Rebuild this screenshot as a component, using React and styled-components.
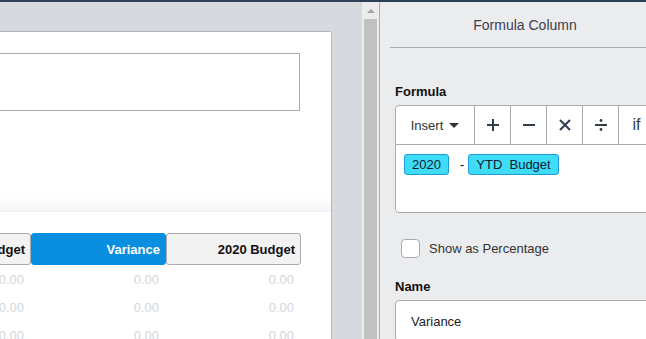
import styled, { createGlobalStyle } from "styled-components";

const Global = createGlobalStyle`
	html, body {
		margin: 0;
		padding: 0;
		overflow: hidden;
		background: #d6d9dd;
		font-family: "Liberation Sans", Arial, sans-serif;
	}
`;

const Screen = styled.div`
	width: 646px;
	height: 339px;
	display: flex;
	flex-direction: column;
	overflow: hidden;
`;

const TopBar = styled.div`
	height: 2px;
	background: #2e4053;
	flex-shrink: 0;
`;

const Body = styled.div`
	flex: 1;
	display: flex;
	min-height: 0;
`;

const Workspace = styled.div`
	width: 362px;
	flex-shrink: 0;
	background: #d6d9dd;
	padding-top: 29px;
	overflow: hidden;
`;

const Card = styled.div`
	margin-left: -135px;
	width: 466px;
	background: #fff;
	border: 1px solid #b2b5ba;
	border-left: none;
	border-bottom: none;
	border-top-right-radius: 3px;
	display: flex;
	flex-direction: column;
`;

const TopSection = styled.div`
	flex-shrink: 0;
	box-sizing: border-box;
	height: 180px;
	padding: 21px 31px 0;
	background: linear-gradient(to bottom, #fff 92%, #f3f4f5 100%);
	border-bottom: 1px solid #eef0f2;
`;

const TextBox = styled.div`
	height: 56px;
	border: 1px solid #a9abae;
`;

const TableSection = styled.div`
	flex-shrink: 0;
	padding: 21px 31px 0;
`;

const Row = styled.div`
	display: grid;
	grid-template-columns: repeat(3, 135px);
`;

const HeadCell = styled.div`
	height: 32px;
	box-sizing: border-box;
	display: flex;
	align-items: center;
	justify-content: flex-end;
	padding-right: 5px;
	font-size: 13px;
	font-weight: bold;
	border-radius: 3px;
	border: 1px solid ${({ active }) => (active ? "#0a8fe0" : "#a9abae")};
	background: ${({ active }) => (active ? "#0a8fe0" : "#f2f2f2")};
	color: ${({ active }) => (active ? "#fff" : "#111")};
`;

const Cell = styled.div`
	height: 28px;
	display: flex;
	align-items: center;
	justify-content: flex-end;
	padding-right: 7px;
	font-size: 13px;
	color: #d2d6dc;
`;

const Scrollbar = styled.div`
	width: 17px;
	flex-shrink: 0;
	background: #ececec;
	display: flex;
	flex-direction: column;
	align-items: center;
	padding: 0 2px;
	box-sizing: border-box;
`;

const ScrollArrow = styled.div`
	height: 17px;
	display: flex;
	align-items: center;
	justify-content: center;
	&::after {
		content: "";
		border-left: 4px solid transparent;
		border-right: 4px solid transparent;
		border-bottom: 4px solid #a3a3a3;
	}
`;

const Thumb = styled.div`
	flex: 1;
	width: 13px;
	background: #c1c1c1;
`;

const Panel = styled.div`
	width: 290px;
	flex-shrink: 0;
	background: #ebecee;
	border-left: 1px solid #a9aeb5;
`;

const PanelHeader = styled.div`
	height: 45px;
	margin-left: 10px;
	border-bottom: 1px solid #a9acb1;
	display: flex;
	align-items: center;
	justify-content: center;
	padding-right: 10px;
	font-size: 14px;
	color: #3d3f4f;
`;

const PanelBody = styled.div`
	padding: 36px 0 0 15px;
`;

const Label = styled.div`
	font-size: 13px;
	font-weight: bold;
	color: #111;
	margin-bottom: 6px;
`;

const Editor = styled.div`
	height: 106px;
	background: #fff;
	border: 1px solid #a9abae;
	border-radius: 4px;
	display: flex;
	flex-direction: column;
`;

const Toolbar = styled.div`
	display: flex;
	height: 38px;
	border-bottom: 1px solid #a9abae;
`;

const Tool = styled.div`
	width: ${({ wide }) => (wide ? "78px" : "35px")};
	border-right: 1px solid #a9abae;
	display: flex;
	align-items: center;
	justify-content: center;
	gap: 6px;
	font-size: 13px;
	color: #2f3d4c;
	&:last-child {
		border-right: none;
	}
`;

const InsertText = styled.span`
	color: #333;
`;

const Caret = styled.span`
	border-left: 5px solid transparent;
	border-right: 5px solid transparent;
	border-top: 5px solid #333;
`;

const IfText = styled.span`
	font-size: 16px;
	color: #2f3d4c;
`;

const Expression = styled.div`
	display: flex;
	align-items: center;
	gap: 7px;
	padding: 9px 0 0 8px;
	font-size: 13px;
	color: #111;
`;

const Chip = styled.span`
	height: 19px;
	display: inline-flex;
	align-items: center;
	padding: 0 7px;
	background: #3edcf7;
	border: 1px solid #1f9dd8;
	border-radius: 3px;
	color: #10202e;
	white-space: pre;
`;

const Operator = styled.span`
	margin-left: 4px;
	margin-right: -3px;
`;

const CheckRow = styled.label`
	display: flex;
	align-items: center;
	gap: 9px;
	margin: 26px 0 0 6px;
	font-size: 13px;
	color: #333;
`;

const Box = styled.span`
	width: 17px;
	height: 17px;
	border: 1px solid #a9abae;
	border-radius: 4px;
	background: #fff;
`;

const NameLabel = styled(Label)`
	margin-top: 21px;
`;

const Input = styled.div`
	height: 40px;
	background: #fff;
	border: 1px solid #a9abae;
	border-radius: 4px;
	display: flex;
	align-items: center;
	padding-left: 15px;
	font-size: 13px;
	color: #222;
`;

const Icon = ({ d }) => (
	<svg width="14" height="14" viewBox="0 0 14 14" fill="none" stroke="#2f3d4c" strokeWidth="2">
		<path d={d} />
	</svg>
);

const Divide = () => (
	<svg width="14" height="14" viewBox="0 0 14 14">
		<rect x="1" y="6" width="12" height="2" fill="#2f3d4c" />
		<circle cx="7" cy="2.5" r="1.4" fill="#2f3d4c" />
		<circle cx="7" cy="11.5" r="1.4" fill="#2f3d4c" />
	</svg>
);

const rows = [0, 1, 2];

const App = () => {
	return (
		<Screen>
			<Global />
			<TopBar />
			<Body>
				<Workspace>
					<Card>
						<TopSection>
							<TextBox />
						</TopSection>
						<TableSection>
							<Row>
								<HeadCell>YTD Budget</HeadCell>
								<HeadCell active>Variance</HeadCell>
								<HeadCell>2020 Budget</HeadCell>
							</Row>
							{rows.map((r) => (
								<Row key={r}>
									<Cell>0.00</Cell>
									<Cell>0.00</Cell>
									<Cell>0.00</Cell>
								</Row>
							))}
						</TableSection>
					</Card>
				</Workspace>
				<Scrollbar>
					<ScrollArrow />
					<Thumb />
				</Scrollbar>
				<Panel>
					<PanelHeader>Formula Column</PanelHeader>
					<PanelBody>
						<Label>Formula</Label>
						<Editor>
							<Toolbar>
								<Tool wide>
									<InsertText>Insert</InsertText>
									<Caret />
								</Tool>
								<Tool>
									<Icon d="M7 1v12M1 7h12" />
								</Tool>
								<Tool>
									<Icon d="M1 7h12" />
								</Tool>
								<Tool>
									<Icon d="M2 2l10 10M12 2L2 12" />
								</Tool>
								<Tool>
									<Divide />
								</Tool>
								<Tool>
									<IfText>if</IfText>
								</Tool>
							</Toolbar>
							<Expression>
								<Chip>2020</Chip>
								<Operator>-</Operator>
								<Chip>YTD  Budget</Chip>
							</Expression>
						</Editor>
						<CheckRow>
							<Box />
							Show as Percentage
						</CheckRow>
						<NameLabel>Name</NameLabel>
						<Input>Variance</Input>
					</PanelBody>
				</Panel>
			</Body>
		</Screen>
	);
};

export default App;
